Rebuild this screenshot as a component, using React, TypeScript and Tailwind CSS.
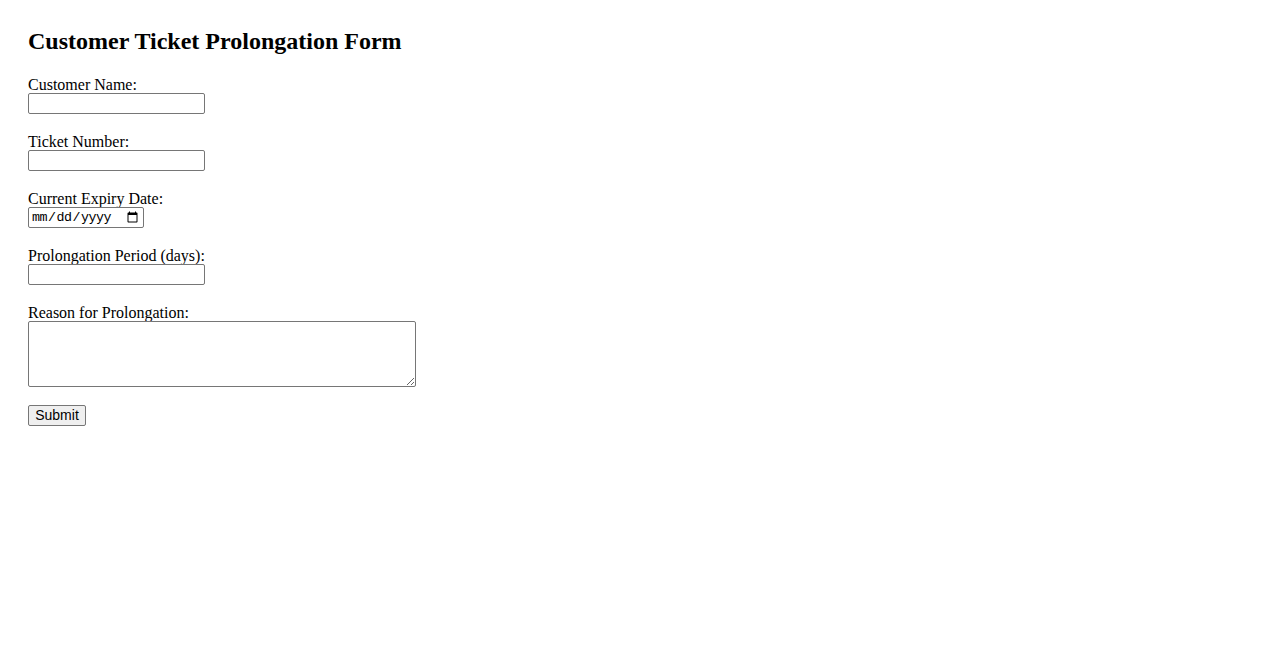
import React from "react";

const inputCls =
  "block w-[177px] h-[21px] border border-[#767676] rounded-[2px] px-[2px] py-[1px] bg-white text-[13.33px] text-black outline-none [font-family:'Liberation_Sans',Arial,sans-serif]";

function Field({ label, children }: { label: string; children: React.ReactNode }) {
  return (
    <div className="flex flex-col items-start mb-[18px]">
      <label className="block text-[16px] leading-[17px] pt-[1px] text-black">{label}</label>
      {children}
    </div>
  );
}

export default function App() {
  return (
    <div className="min-h-[650px] bg-white px-[28px] pt-[28px] text-black [font-family:'Liberation_Serif','Times_New_Roman',serif]">
      <h2 className="text-[24px] font-bold leading-[27px] mb-[20px]">Customer Ticket Prolongation Form</h2>
      <form className="flex flex-col items-start" onSubmit={(e) => e.preventDefault()}>
        <Field label="Customer Name:">
          <input type="text" className={inputCls} />
        </Field>
        <Field label="Ticket Number:">
          <input type="text" className={inputCls} />
        </Field>
        <Field label="Current Expiry Date:">
          <input
            type="date"
            className="block w-[116px] h-[21px] border border-[#767676] rounded-[2px] px-[2px] py-0 bg-white text-[13.33px] text-black outline-none [font-family:'Liberation_Mono',monospace] tracking-[-0.5px]"
          />
        </Field>
        <Field label="Prolongation Period (days):">
          <input type="number" className={inputCls} />
        </Field>
        <Field label="Reason for Prolongation:">
          <textarea className="block w-[388px] h-[66px] border border-[#767676] rounded-[2px] px-[2px] py-[2px] bg-white text-[13.33px] text-black outline-none resize [font-family:'Liberation_Mono',monospace]" />
        </Field>
        <button
          type="submit"
          className="w-[58px] h-[21px] px-0 py-[1px] border border-[#767676] rounded-[2px] bg-[#efefef] text-[14px] leading-[17px] text-black text-center [font-family:'Liberation_Sans',Arial,sans-serif]"
        >
          Submit
        </button>
      </form>
    </div>
  );
}
